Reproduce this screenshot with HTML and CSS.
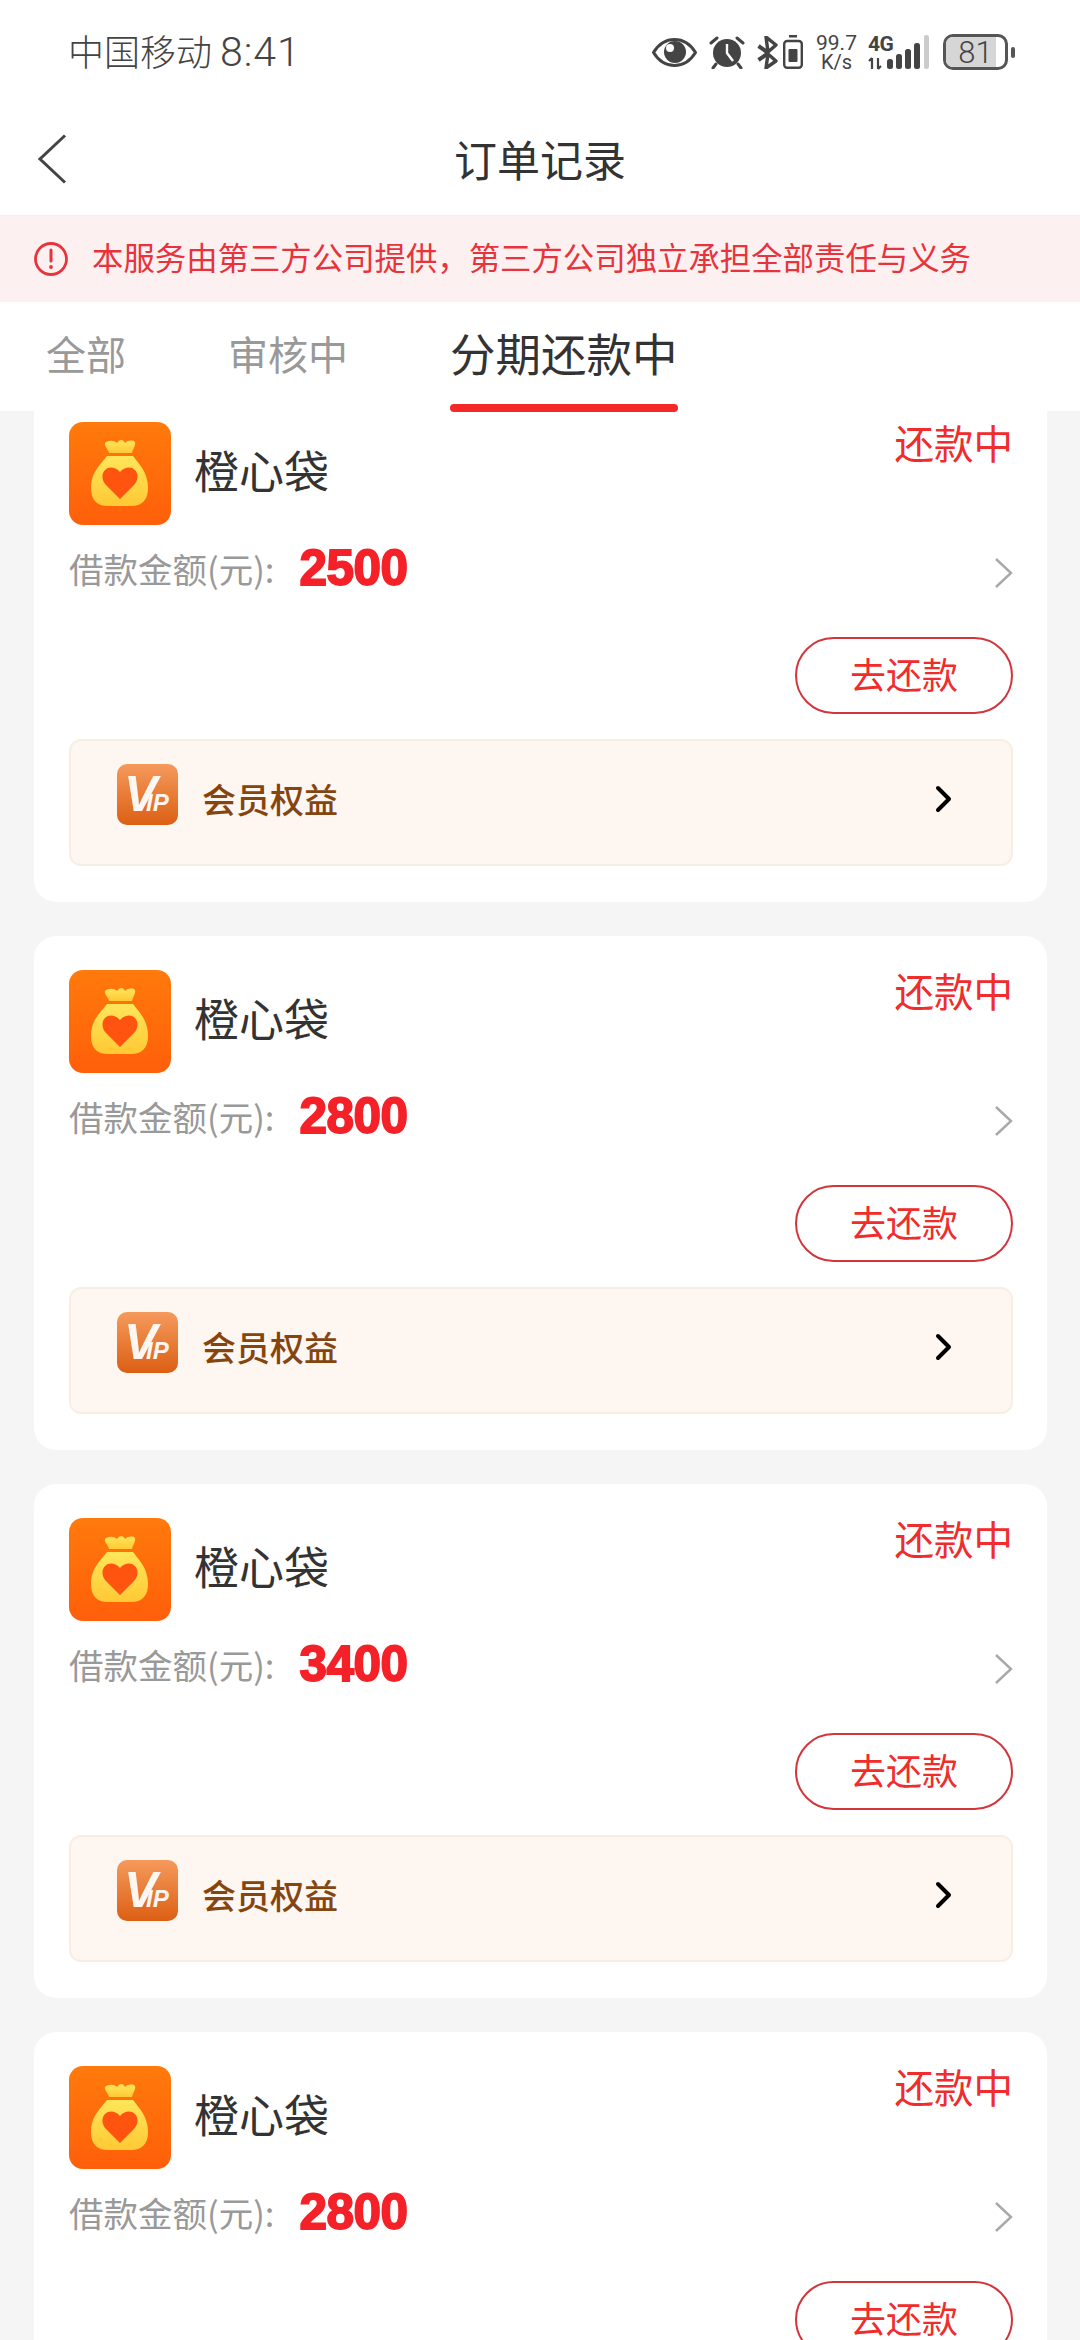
FILE: index.html
```html
<!DOCTYPE html>
<html lang="zh-CN">
<head>
    <meta charset="UTF-8">
    <meta name="viewport" content="width=device-width, initial-scale=1.0">
    <title>订单记录</title>
    <link rel="stylesheet" href="styles.css">
</head>
<body>

    <svg class="defs" aria-hidden="true">
        <defs>
            <linearGradient id="appBg" x1="0" y1="0" x2="0" y2="1">
                <stop offset="0" stop-color="#ff7a0c"/>
                <stop offset="1" stop-color="#ff5f0a"/>
            </linearGradient>
            <linearGradient id="bagFill" x1="0" y1="0" x2="0" y2="1">
                <stop offset="0" stop-color="#ffe65a"/>
                <stop offset="1" stop-color="#ffc935"/>
            </linearGradient>
            <linearGradient id="vipBg" x1="0" y1="0" x2="0" y2="1">
                <stop offset="0" stop-color="#f59a5c"/>
                <stop offset="1" stop-color="#dc5f14"/>
            </linearGradient>
            <symbol id="appIcon" viewBox="0 0 102 103">
                <rect width="102" height="103" rx="14" fill="url(#appBg)"/>
                <path d="M36 21c3-3 9-3 12 0 1-2 3-3 4-3 2 0 3 1 4 3 3-3 8-3 10-1 1 3-2 7-3 11H40c-1-4-5-7-4-10z" fill="url(#bagFill)"/>
                <path d="M38 34h26c6 8 15 16 15 32 0 12-6 18-17 18H39c-11 0-17-6-17-18 0-16 10-24 16-32z" fill="url(#bagFill)"/>
                <path d="M51 77 37 63c-4-4-5-11-1-15 4-4 11-3 15 2 4-5 11-6 15-2 4 4 3 11-1 15z" fill="#ff5310"/>
            </symbol>
            <symbol id="vipIcon" viewBox="0 0 61 61">
                <rect width="61" height="61" rx="10" fill="url(#vipBg)"/>
                <text class="vip-v" x="7" y="47">V</text>
                <text class="vip-ip" x="29" y="47">IP</text>
            </symbol>
            <symbol id="grayArrow" viewBox="0 0 18 30">
                <path d="M1 1l15 14L1 29" fill="none" stroke="#a8a8a8" stroke-width="2.400"/>
            </symbol>
            <symbol id="blackArrow" viewBox="0 0 18 28">
                <path d="M3 3l11 11L3 25" fill="none" stroke="#000" stroke-width="4" stroke-linecap="round" stroke-linejoin="round"/>
            </symbol>
        </defs>
    </svg>

    <div class="phone">
        <header class="status-bar">
            <div class="status-left">中国移动 <span class="clock">8:41</span></div>
            <div class="status-right">
                <svg class="ico-eye" viewBox="0 0 45 29">
                    <path d="M1.500 14.500C7 5.500 14 1.500 22.500 1.500S38 5.500 43.500 14.500C38 23.500 31 27.500 22.500 27.500S7 23.500 1.500 14.500z" fill="none" stroke="#444" stroke-width="3"/>
                    <circle cx="23" cy="14" r="11" fill="#444"/>
                    <circle cx="18" cy="10" r="4" fill="#fff"/>
                </svg>
                <svg class="ico-alarm" viewBox="0 0 36 33">
                    <circle cx="18" cy="17" r="14" fill="#444"/>
                    <path d="M18 8v9l6 8" fill="none" stroke="#fff" stroke-width="2.400"/>
                    <path d="M2 7l6-5M34 7l-6-5M7 28l-3 4M29 28l3 4" stroke="#444" stroke-width="3" stroke-linecap="round"/>
                </svg>
                <svg class="ico-bt" viewBox="0 0 21 33">
                    <path d="M1.500 10l10 7M1.500 24l10-7" stroke="#444" stroke-width="4" fill="none"/>
                    <path d="M9 1l10 8-8 7zM11 18l8 7-10 7z" fill="none" stroke="#444" stroke-width="3.400" stroke-linejoin="round"/>
                </svg>
                <svg class="ico-vib" viewBox="0 0 20 34">
                    <rect x="6" y="0" width="8" height="2.500" fill="#444"/>
                    <rect x="1.200" y="6" width="17.600" height="26.800" rx="3" fill="none" stroke="#444" stroke-width="2.400"/>
                    <rect x="5.500" y="14" width="9" height="13" rx="1" fill="#444"/>
                </svg>
                <div class="speed"><span class="speed-num">99.7</span><span class="speed-unit">K/s</span></div>
                <div class="signal">
                    <span class="net">4G</span>
                    <svg class="ico-bars" viewBox="0 0 62 35">
                        <path d="M4 23v11M1 26l3-3M10 23v11M13 31l-3 3" stroke="#444" stroke-width="2.200" fill="none"/>
                        <rect x="19" y="24" width="6" height="10" rx="2.500" fill="#444"/>
                        <rect x="28" y="19" width="6" height="15" rx="2.500" fill="#444"/>
                        <rect x="37" y="14" width="6" height="20" rx="2.500" fill="#444"/>
                        <rect x="46" y="8" width="6" height="26" rx="2.500" fill="#444"/>
                        <rect x="56" y="0" width="5" height="34" rx="2" fill="#ccc"/>
                    </svg>
                </div>
                <div class="battery"><span class="battery-fill"></span><span class="battery-num">81</span></div>
                <span class="battery-nub"></span>
            </div>
        </header>

        <nav class="nav-bar">
            <svg class="back" viewBox="0 0 30 50"><path d="M28 1.500 3 25l25 23.500" fill="none" stroke="#444" stroke-width="3"/></svg>
            <h1 class="nav-title">订单记录</h1>
        </nav>

        <div class="notice">
            <svg class="notice-ico" viewBox="0 0 36 36">
                <circle cx="18" cy="18" r="15.500" fill="none" stroke="#e8333c" stroke-width="2.800"/>
                <path d="M18 9v11" stroke="#e8333c" stroke-width="3" stroke-linecap="round"/>
                <circle cx="18" cy="26" r="1.900" fill="#e8333c"/>
            </svg>
            <span class="notice-text">本服务由第三方公司提供，第三方公司独立承担全部责任与义务</span>
        </div>

        <div class="tabs">
            <div class="tab">全部</div>
            <div class="tab">审核中</div>
            <div class="tab tab-active">分期还款中</div>
        </div>

        <main class="list">
            <div class="list-inner">

                <section class="card">
                    <div class="card-head">
                        <svg class="app-icon"><use href="#appIcon"/></svg>
                        <div class="app-name">橙心袋</div>
                        <div class="state">还款中</div>
                    </div>
                    <div class="loan">
                        <span class="loan-label">借款金额(元):</span>
                        <span class="loan-amount">2500</span>
                        <svg class="arrow-gray"><use href="#grayArrow"/></svg>
                    </div>
                    <div class="actions"><a class="pay-btn">去还款</a></div>
                    <div class="vip">
                        <svg class="vip-icon"><use href="#vipIcon"/></svg>
                        <span class="vip-text">会员权益</span>
                        <svg class="arrow-black"><use href="#blackArrow"/></svg>
                    </div>
                </section>

                <section class="card">
                    <div class="card-head">
                        <svg class="app-icon"><use href="#appIcon"/></svg>
                        <div class="app-name">橙心袋</div>
                        <div class="state">还款中</div>
                    </div>
                    <div class="loan">
                        <span class="loan-label">借款金额(元):</span>
                        <span class="loan-amount">2800</span>
                        <svg class="arrow-gray"><use href="#grayArrow"/></svg>
                    </div>
                    <div class="actions"><a class="pay-btn">去还款</a></div>
                    <div class="vip">
                        <svg class="vip-icon"><use href="#vipIcon"/></svg>
                        <span class="vip-text">会员权益</span>
                        <svg class="arrow-black"><use href="#blackArrow"/></svg>
                    </div>
                </section>

                <section class="card">
                    <div class="card-head">
                        <svg class="app-icon"><use href="#appIcon"/></svg>
                        <div class="app-name">橙心袋</div>
                        <div class="state">还款中</div>
                    </div>
                    <div class="loan">
                        <span class="loan-label">借款金额(元):</span>
                        <span class="loan-amount">3400</span>
                        <svg class="arrow-gray"><use href="#grayArrow"/></svg>
                    </div>
                    <div class="actions"><a class="pay-btn">去还款</a></div>
                    <div class="vip">
                        <svg class="vip-icon"><use href="#vipIcon"/></svg>
                        <span class="vip-text">会员权益</span>
                        <svg class="arrow-black"><use href="#blackArrow"/></svg>
                    </div>
                </section>

                <section class="card">
                    <div class="card-head">
                        <svg class="app-icon"><use href="#appIcon"/></svg>
                        <div class="app-name">橙心袋</div>
                        <div class="state">还款中</div>
                    </div>
                    <div class="loan">
                        <span class="loan-label">借款金额(元):</span>
                        <span class="loan-amount">2800</span>
                        <svg class="arrow-gray"><use href="#grayArrow"/></svg>
                    </div>
                    <div class="actions"><a class="pay-btn">去还款</a></div>
                    <div class="vip">
                        <svg class="vip-icon"><use href="#vipIcon"/></svg>
                        <span class="vip-text">会员权益</span>
                        <svg class="arrow-black"><use href="#blackArrow"/></svg>
                    </div>
                </section>

            </div>
        </main>
    </div>

</body>
</html>
```

FILE: styles.css
```css
* { box-sizing: border-box; }
html, body { margin: 0; padding: 0; }
body { font-family: "Noto Sans CJK SC", "Noto Sans", sans-serif; background: #f5f5f5; color: #333; }
.defs { position: absolute; width: 0; height: 0; }
.phone { width: 1080px; height: 2340px; display: flex; flex-direction: column; overflow: hidden; }

/* status bar */
.status-bar { height: 104px; flex: none; background: #fff; display: flex; align-items: center; padding: 0 65px 0 68px; justify-content: space-between; }
.status-left { font-size: 36px; font-weight: 300; color: #444; margin-bottom: 4px; }
.clock { font-family: Roboto, sans-serif; font-weight: 300; font-size: 41px; letter-spacing: 1px; }
.status-right { display: flex; align-items: center; height: 40px; }
.ico-eye { width: 45px; height: 29px; margin-right: 12px; }
.ico-alarm { width: 36px; height: 33px; margin-right: 12px; }
.ico-bt { width: 21px; height: 33px; margin-right: 5px; }
.ico-vib { width: 20px; height: 34px; margin-right: 13px; }
.speed { width: 41px; display: flex; flex-direction: column; align-items: center; font-family: Roboto, sans-serif; color: #444; margin-right: 11px; }
.speed-num { font-size: 21px; line-height: 19px; white-space: nowrap; }
.speed-unit { font-size: 20px; line-height: 18px; }
.signal { position: relative; width: 62px; height: 35px; margin-right: 13px; }
.net { position: absolute; left: 0; top: 0; font-family: Roboto, sans-serif; font-weight: 700; font-size: 21px; line-height: 18px; color: #444; letter-spacing: -0.500px; }
.ico-bars { position: absolute; left: 0; top: 0; width: 62px; height: 35px; }
.battery { position: relative; width: 65px; height: 36px; border: 3px solid #555; border-radius: 10px; overflow: hidden; display: flex; align-items: center; justify-content: center; }
.battery-fill { position: absolute; left: 0; top: 0; bottom: 0; width: 84%; background: #d6d6d6; }
.battery-num { position: relative; font-family: Roboto, sans-serif; font-weight: 300; font-size: 31px; color: #444; }
.battery-nub { width: 4px; height: 11px; background: #555; border-radius: 2px; margin-left: 3px; }

/* nav */
.nav-bar { height: 112px; flex: none; background: #fff; display: flex; align-items: center; justify-content: center; position: relative; border-bottom: 1px solid #f4eeee; }
.back { position: absolute; left: 37px; top: 30px; width: 30px; height: 50px; }
.nav-title { margin: 0 0 3px; font-size: 43px; font-weight: 400; color: #333; line-height: 1; }

/* notice */
.notice { height: 86px; flex: none; background: #fdf0f0; display: flex; align-items: center; padding-left: 33px; color: #e8333c; }
.notice-ico { width: 36px; height: 36px; margin-right: 23px; flex: none; }
.notice-text { font-size: 31.400px; margin-bottom: 5px; }

/* tabs */
.tabs { height: 109px; flex: none; background: #fff; display: flex; align-items: center; padding: 0 0 8px 46px; gap: 102px; position: relative; z-index: 1; }
.tab { font-size: 40px; color: #999; position: relative; line-height: 1; }
.tab-active { font-size: 45.500px; color: #333; }
.tab-active::after { content: ""; position: absolute; left: 0; right: 0; bottom: -37px; height: 8px; border-radius: 4px; background: #f52828; }

/* list */
.list { flex: 1; min-height: 0; overflow: hidden; }
.list-inner { margin-top: -23px; padding: 0 33px 0 34px; display: flex; flex-direction: column; gap: 34px; }
.card { height: 514px; flex: none; background: #fff; border-radius: 22px; padding: 34px 34px 0 35px; display: flex; flex-direction: column; }
.card-head { display: flex; height: 103px; }
.app-icon { width: 102px; height: 103px; flex: none; }
.app-name { margin-left: 23px; font-size: 45px; color: #333; line-height: 95px; }
.state { margin-left: auto; font-size: 39.500px; color: #f02c2c; line-height: 1; }

.loan { display: flex; align-items: center; height: 64px; margin-top: 13px; }
.loan-label { font-size: 34.500px; color: #999; margin-bottom: 5px; }
.loan-amount { font-family: "Liberation Sans", Arial, sans-serif; font-weight: 700; font-size: 49.500px; color: #f52128; margin-left: 25px; margin-bottom: 5px; -webkit-text-stroke: 1.800px #f52128; letter-spacing: -0.500px; }
.arrow-gray { width: 18px; height: 30px; margin-left: auto; margin-top: 6px; }

.actions { display: flex; justify-content: flex-end; margin-top: 35px; }
.pay-btn { width: 218px; height: 77px; border: 2.500px solid #d2353c; border-radius: 39px; display: flex; align-items: center; justify-content: center; color: #f02c2c; font-size: 36px; padding-bottom: 5px; }

.vip { height: 127px; margin-top: 25px; background: #fdf6f1; border: 2px solid #f9eee3; border-radius: 12px; display: flex; align-items: center; padding: 0 58px 0 46px; }
.vip-icon { width: 61px; height: 61px; flex: none; margin-bottom: 17px; }
.vip-text { margin-left: 24px; font-size: 34px; color: #85450f; font-weight: 500; margin-bottom: 9px; }
.arrow-black { width: 18px; height: 28px; margin-left: auto; margin-bottom: 8px; }
.vip-v { font-family: "Liberation Sans", sans-serif; font-weight: 700; font-style: italic; font-size: 50px; fill: #fdf6f1; }
.vip-ip { font-family: "Liberation Sans", sans-serif; font-weight: 700; font-style: italic; font-size: 24px; fill: #fdf6f1; }
```
